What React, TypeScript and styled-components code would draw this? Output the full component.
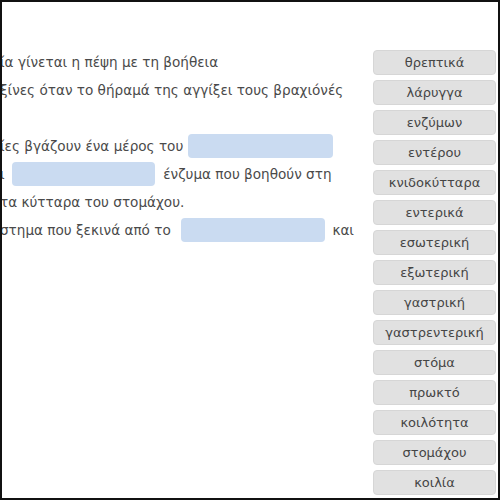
import styled, { createGlobalStyle } from "styled-components";

const GlobalStyle = createGlobalStyle`
    html, body { margin: 0; padding: 0; background: #fff; }
    * { box-sizing: border-box; }
`;

const words = [
    "θρεπτικά", "λάρυγγα", "ενζύμων", "εντέρου", "κνιδοκύτταρα",
    "εντερικά", "εσωτερική", "εξωτερική", "γαστρική", "γαστρεντερική",
    "στόμα", "πρωκτό", "κοιλότητα", "στομάχου", "κοιλία",
];

const App = () => {
    return (
        <>
            <GlobalStyle />
            <Frame>
                <TextPane>
                    <Line>ία γίνεται η πέψη με τη βοήθεια</Line>
                    <Line>ξίνες όταν το θήραμά της αγγίξει τους βραχιόνές</Line>
                    <Line />
                    <Line>ίες βγάζουν ένα μέρος του <Blank $width={145} $before={0} $after={8} /></Line>
                    <Line>ι <Blank $width={143} $before={3} $after={4} /> ένζυμα που βοηθούν στη</Line>
                    <Line>τα κύτταρα του στομάχου.</Line>
                    <Line>στημα που ξεκινά από το <Blank $width={144} $before={6} $after={3} /> και</Line>
                </TextPane>
                <WordBank>
                    {words.map((w) => (
                        <Word key={w}>{w}</Word>
                    ))}
                </WordBank>
            </Frame>
        </>
    );
};

const Frame = styled.div`
    width: 500px;height: 500px;display: flex;
    border: 2px solid #111;overflow: hidden;background: #fff;
    font-family: "DejaVu Sans", "Liberation Sans", sans-serif;
`;

const TextPane = styled.div`
    flex: 1;min-width: 0;padding-top: 46px;margin-left: -2px;
    white-space: nowrap;overflow: hidden;
    color: #4a4a4a;font-size: 13.6px;
`;

const Line = styled.div`
    height: 28px;line-height: 28px;
`;

const Blank = styled.span<{ $width: number; $before: number; $after: number }>`
    display: inline-block;vertical-align: middle;
    width: ${({ $width }) => $width}px;height: 24px;
    margin: -3px ${({ $after }) => $after}px 0 ${({ $before }) => $before}px;
    background: #cadbf1;border-radius: 4px;
`;

const WordBank = styled.div`
    width: 123px;margin-right: 2px;padding-top: 48px;
    display: flex;flex-direction: column;gap: 5px;
`;

const Word = styled.div`
    height: 25px;line-height: 23px;text-align: center;
    background: #e1e1e1;border: 1px solid #d6d6d6;border-radius: 4px;
    color: #454545;font-size: 13px;
`;

export default App;
